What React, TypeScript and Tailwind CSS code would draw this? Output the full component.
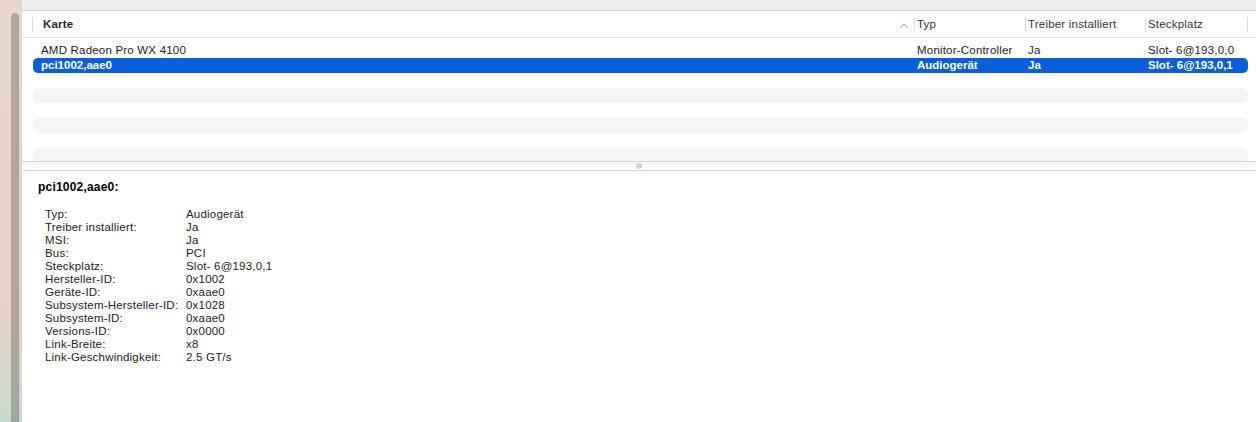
import React from "react";

const font = { fontFamily: '"Liberation Sans", Arial, sans-serif' };

type Row = { karte: string; typ: string; treiber: string; slot: string };

const rows: Row[] = [
  { karte: "AMD Radeon Pro WX 4100", typ: "Monitor-Controller", treiber: "Ja", slot: "Slot- 6@193,0,0" },
  { karte: "pci1002,aae0", typ: "Audiogerät", treiber: "Ja", slot: "Slot- 6@193,0,1" },
];

const details: [string, string][] = [
  ["Typ:", "Audiogerät"],
  ["Treiber installiert:", "Ja"],
  ["MSI:", "Ja"],
  ["Bus:", "PCI"],
  ["Steckplatz:", "Slot- 6@193,0,1"],
  ["Hersteller-ID:", "0x1002"],
  ["Geräte-ID:", "0xaae0"],
  ["Subsystem-Hersteller-ID:", "0x1028"],
  ["Subsystem-ID:", "0xaae0"],
  ["Versions-ID:", "0x0000"],
  ["Link-Breite:", "x8"],
  ["Link-Geschwindigkeit:", "2.5 GT/s"],
];

function Sep() {
  return <span className="h-[15px] w-px shrink-0 bg-[#dcdcdc]" />;
}

function HeaderCell({ label, width }: { label: string; width: string }) {
  return (
    <div className={`flex h-full items-center ${width}`}>
      <Sep />
      <span className="pl-[2px] pt-[2px] text-[#333]">{label}</span>
    </div>
  );
}

export default function App() {
  const selected = 1;
  const filler = [2, 3, 4, 5, 6, 7];

  return (
    <div className="flex h-[422px] w-[1256px] overflow-hidden bg-white text-[11.5px] tracking-[0.2px]" style={font}>
      {/* window edge with scroller */}
      <div className="flex w-[22px] shrink-0 flex-col bg-gradient-to-b from-[#e8d6cf] via-[#e7d0c8] via-75% to-[#c6dbcc] pt-[13px]">
        <div className="ml-[11px] w-[8px] flex-1 rounded-t-full bg-gradient-to-b from-[#b3a6a2] via-[#b2a49f] via-75% to-[#9ea89f]" />
      </div>

      <div className="flex min-w-0 flex-1 flex-col">
        <div className="h-[11px] shrink-0 border-b border-[#d9d9d9] bg-[#eeeeee]" />

        {/* column header */}
        <div className="flex h-[27px] shrink-0 items-center border-b border-[#e3e3e3] pl-[10px]">
          <div className="flex h-full w-[882px] items-center">
            <Sep />
            <span className="pl-[10px] pt-[2px] font-bold text-[#2a2a2a]">Karte</span>
            <svg className="ml-auto mr-[6px] mt-[2px]" width="8" height="5" viewBox="0 0 8 5" fill="none">
              <path d="M1 4.2 L4 1.2 L7 4.2" stroke="#a8a8a8" strokeWidth="1.1" strokeLinecap="round" strokeLinejoin="round" />
            </svg>
          </div>
          <HeaderCell label="Typ" width="w-[111px]" />
          <HeaderCell label="Treiber installiert" width="w-[120px]" />
          <HeaderCell label="Steckplatz" width="w-[102px]" />
          <Sep />
        </div>

        {/* table rows */}
        <div className="flex h-[123px] shrink-0 flex-col overflow-hidden pl-[11px] pt-[5px]">
          {rows.map((r, i) => {
            const sel = i === selected;
            return (
              <div
                key={r.karte}
                className={`flex h-[15px] w-[1215px] shrink-0 items-center rounded-[5px] ${
                  sel
                    ? "bg-[#0a5fd8] font-bold tracking-normal text-white"
                    : i % 2
                      ? "bg-[#f4f5f5] text-[#222]"
                      : "text-[#222]"
                }`}
              >
                <span className="w-[884px] pl-[8px]">{r.karte}</span>
                <span className="w-[111px]">{r.typ}</span>
                <span className="w-[120px]">{r.treiber}</span>
                <span>{r.slot}</span>
              </div>
            );
          })}
          {filler.map((i) => (
            <div key={i} className={`h-[15px] w-[1215px] shrink-0 rounded-[5px] ${i % 2 ? "bg-[#f4f5f5]" : ""}`} />
          ))}
        </div>

        {/* split handle */}
        <div className="flex h-[10px] shrink-0 items-center justify-center border-y border-[#d6d6d6] bg-gradient-to-b from-[#f7f7f7] to-[#fdfdfd]">
          <span className="h-[6px] w-[6px] rounded-full bg-[#d3d3d3]" />
        </div>

        {/* detail pane */}
        <div className="flex-1 pl-[16px] pt-[10px] text-[#222]">
          <div className="text-[12px] font-bold leading-[13px] text-black">pci1002,aae0:</div>
          <div className="mt-[14px] ml-[7px] flex flex-col">
            {details.map(([k, v]) => (
              <div key={k} className="flex h-[13px] items-center leading-[13px]">
                <span className="w-[141px] shrink-0">{k}</span>
                <span>{v}</span>
              </div>
            ))}
          </div>
        </div>
      </div>
    </div>
  );
}
